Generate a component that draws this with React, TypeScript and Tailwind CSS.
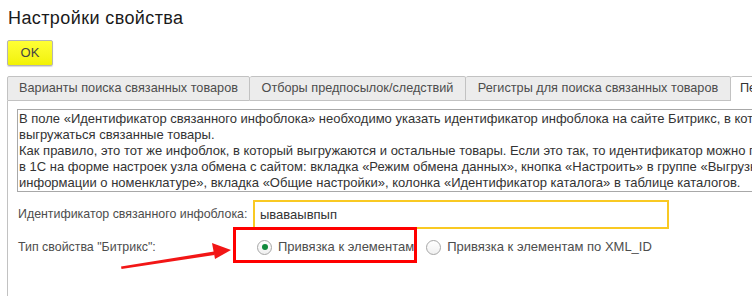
import React from "react"

const font = { fontFamily: '"Liberation Sans", Arial, sans-serif' }

const tabs = [
  { title: "Варианты поиска связанных товаров", w: "w-[243px]" },
  { title: "Отборы предпосылок/следствий", w: "w-[216px]" },
  { title: "Регистры для поиска связанных товаров", w: "w-[265px]" },
]

const lines = [
  "В поле «Идентификатор связанного инфоблока» необходимо указать идентификатор инфоблока на сайте Битрикс, в котором будут",
  "выгружаться связанные товары.",
  "Как правило, это тот же инфоблок, в который выгружаются и остальные товары. Если это так, то идентификатор можно посмотреть",
  "в 1С на форме настроек узла обмена с сайтом: вкладка «Режим обмена данных», кнопка «Настроить» в группе «Выгрузка",
  "информации о номенклатуре», вкладка «Общие настройки», колонка «Идентификатор каталога» в таблице каталогов.",
]

function Radio({ checked, label }: { checked?: boolean; label: string }) {
  return (
    <div className="flex items-center gap-[6px]">
      <div className="w-[15px] h-[15px] rounded-full border border-[#a6a6a6] bg-gradient-to-b from-white to-[#f0f0f0] flex items-center justify-center">
        {checked && <div className="w-[6px] h-[6px] rounded-full bg-[#0f8a3c]" />}
      </div>
      <span className="text-[13px] text-[#4d4d4d] whitespace-nowrap">{label}</span>
    </div>
  )
}

export default function App() {
  return (
    <div className="w-[752px] h-[296px] overflow-hidden bg-white relative" style={font}>
      {/* Title */}
      <div className="pl-[8px] pt-[8px] h-[28px] text-[18px] leading-[20px] tracking-[0.4px] text-[#1a1a1a] whitespace-nowrap">
        Настройки свойства
      </div>

      {/* OK button */}
      <div className="pl-[7px] mt-[12px]">
        <button className="w-[46px] h-[26px] rounded-[2px] border border-[#b5b5b5] bg-gradient-to-b from-[#ffff33] to-[#f2f200] text-[13px] text-[#444] shadow-[0_1px_1px_rgba(0,0,0,0.15)]">
          OK
        </button>
      </div>

      {/* Tabs */}
      <div className="ml-[7px] mt-[10px] flex h-[25px] whitespace-nowrap">
        {tabs.map((t, i) => (
          <div
            key={i}
            className={
              "h-[25px] shrink-0 flex items-center justify-center text-[12.7px] text-[#4d4d4d] bg-[#ececec] border border-[#c2c2c2] rounded-t-[2px] " +
              t.w +
              (i > 0 ? " border-l-0" : "")
            }
          >
            {t.title}
          </div>
        ))}
        <div className="h-[25px] shrink-0 pl-[9px] pr-[40px] flex items-center text-[12.7px] text-[#333] bg-white border border-b-0 border-[#c2c2c2] rounded-t-[2px] border-l-0">
          Печать
        </div>
      </div>

      {/* Panel */}
      <div className="ml-[7px] border-l border-[#c2c2c2] h-[200px] pt-[8px] pl-[9px]">
        <div className="w-[900px] border border-[#a8a8a8] pl-[1px] pt-[1px] text-[13px] leading-[16px] text-[#333]">
          {lines.map((l, i) => (
            <div key={i} className="whitespace-nowrap">
              {l}
            </div>
          ))}
        </div>

        <div className="flex items-center mt-[8px] h-[29px]">
          <div className="w-[236px] shrink-0 pl-[1px] text-[12.4px] text-[#4d4d4d] whitespace-nowrap">
            Идентификатор связанного инфоблока:
          </div>
          <div className="w-[416px] shrink-0 h-[29px] border-2 border-[#f9c923] pl-[5px] flex items-center text-[13px] text-[#333]">
            ываваывпып
          </div>
        </div>

        <div className="flex items-center mt-[7px] h-[22px]">
          <div className="w-[240px] shrink-0 pl-[1px] text-[12.4px] text-[#4d4d4d] whitespace-nowrap">
            Тип свойства "Битрикс":
          </div>
          <div className="flex items-center gap-[12px]">
            <Radio checked label="Привязка к элементам" />
            <Radio label="Привязка к элементам по XML_ID" />
          </div>
        </div>
      </div>

      {/* Annotation: red frame */}
      <div className="absolute left-[233px] top-[227px] w-[184px] h-[36px] border-[3px] border-[#ff0000]" />

      {/* Annotation: red arrow */}
      <svg className="absolute left-0 top-0" width="752" height="296" viewBox="0 0 752 296">
        <polygon points="121,266.5 214,251.5 214.5,255 121.5,269" fill="#f21616" />
        <polygon points="231,250 212,243 215,259" fill="#f21616" />
      </svg>
    </div>
  )
}
